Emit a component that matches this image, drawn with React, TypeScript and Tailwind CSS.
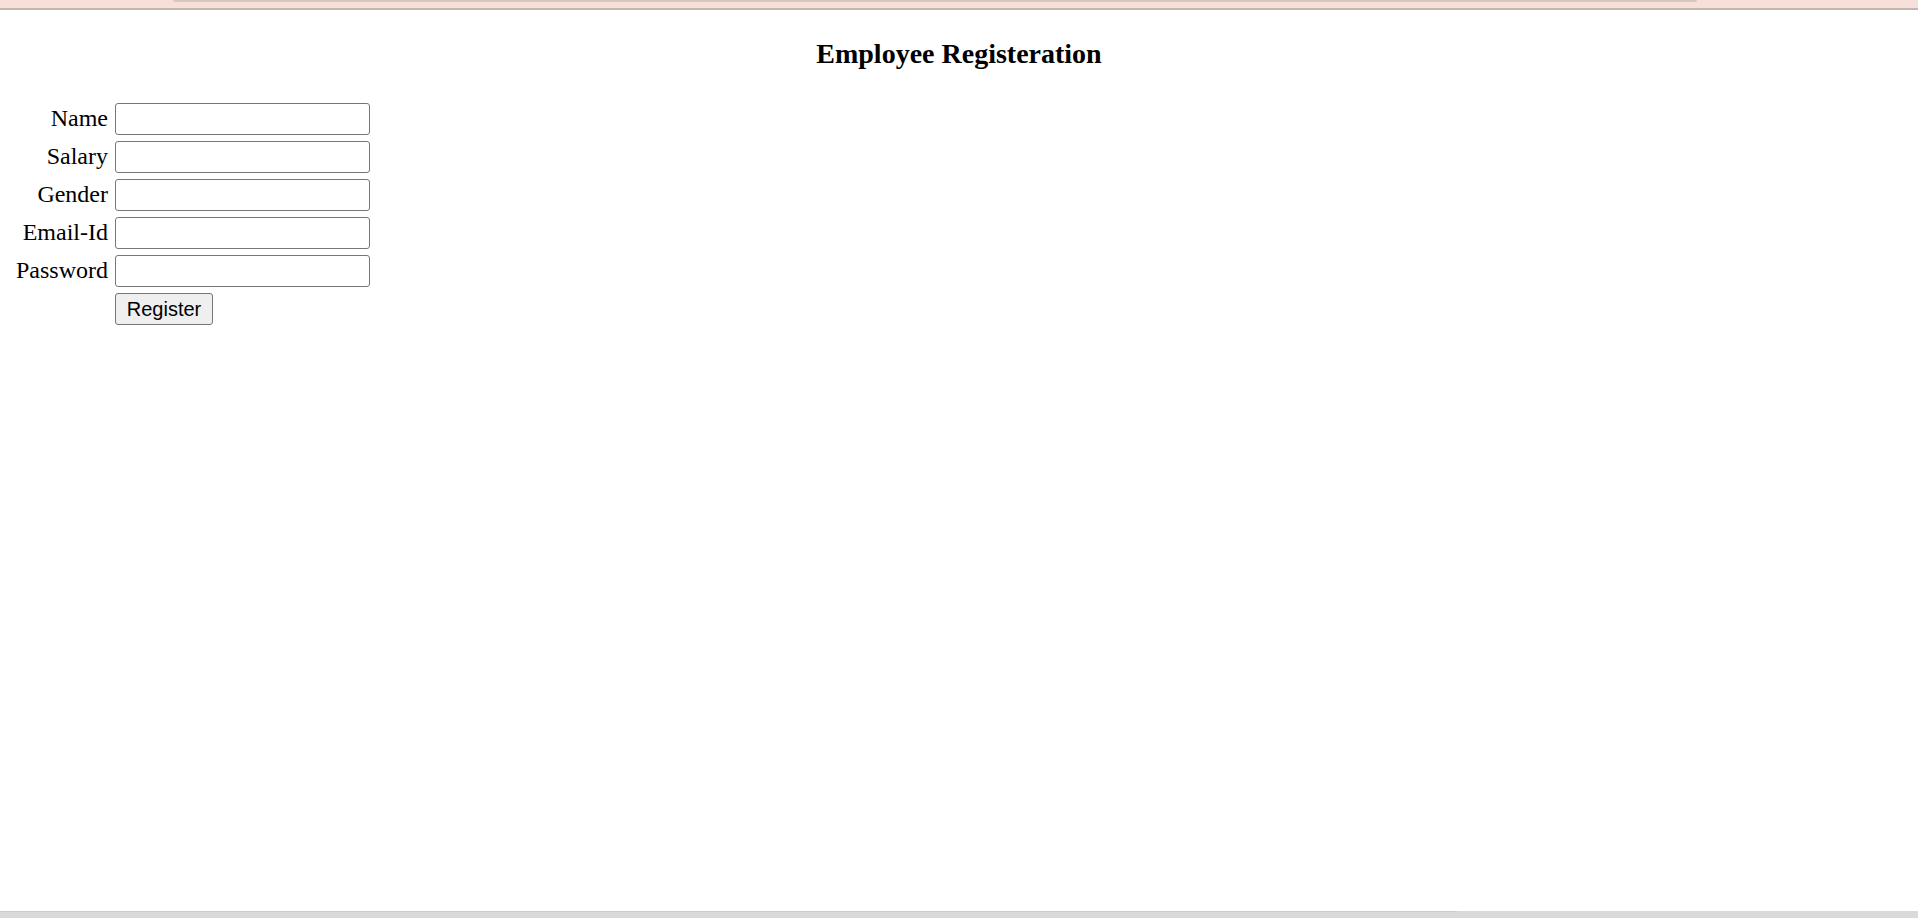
import React from "react";

const fields = ["Name", "Salary", "Gender", "Email-Id", "Password"];

export default function App() {
  return (
    <div className="flex h-[918px] w-full flex-col overflow-hidden bg-white text-black">
      <div className="relative h-[10px] w-full shrink-0 border-b-2 border-[#c4b5b1] bg-[#f6e0d9]">
        <div className="absolute left-[173px] top-0 h-[2px] w-[1524px] rounded-b-[2px] bg-[#d6c6bf]" />
      </div>
      <div className="flex-1 font-['Liberation_Serif','Times_New_Roman',serif]">
        <h3 className="mt-[28px] h-[32px] text-center text-[28px] font-bold leading-[32px]">
          Employee Registeration
        </h3>
        <div className="mt-[33px] grid w-max grid-cols-[auto_auto] items-center gap-x-[7px] gap-y-[6px] pl-[16px]">
          {fields.map((f) => (
            <React.Fragment key={f}>
              <label className="pb-[2px] text-right text-[24px] leading-[28px]">{f}</label>
              <input
                type={f === "Password" ? "password" : "text"}
                className="h-[32px] w-[255px] rounded-[3px] border border-[#767676] bg-white px-[3px] outline-none"
              />
            </React.Fragment>
          ))}
          <div />
          <button className="h-[32px] w-[98px] rounded-[3px] border border-[#767676] bg-[#efefef] font-['Liberation_Sans',Arial,sans-serif] text-[20px] leading-none text-black">
            Register
          </button>
        </div>
      </div>
      <div className="h-[7px] w-full shrink-0 bg-[#dadada]">
        <div className="h-[1px] w-[1457px] bg-[#cccccc]" />
      </div>
    </div>
  );
}
